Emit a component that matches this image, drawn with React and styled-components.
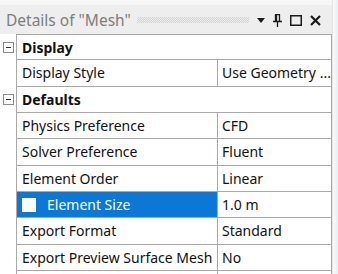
import React from 'react';
import styled, { createGlobalStyle } from 'styled-components';

const Global = createGlobalStyle`
  html, body {
    margin: 0;
    padding: 0;
    background: #ffffff;
  }
  body {
    font-family: "Noto Sans", "Open Sans", sans-serif;
  }
`

const Page = styled.div`
  display: flex;
  flex-direction: row;
  width: 338px;
  height: 274px;
  overflow: hidden;
  background: #ffffff;
`
const Main = styled.div`
  display: flex;
  flex-direction: column;
  width: 332px;
  flex-shrink: 0;
`
const RightEdge = styled.div`
  width: 6px;
  border-left: 1px solid #e4e4e4;
  background: linear-gradient(to right, #fafafa, #e9eef5);
  box-sizing: border-box;
`
const TopGap = styled.div`
  height: 5px;
  flex-shrink: 0;
  background: #f7f7f7;
`
const TitleBar = styled.div`
  height: 29px;
  flex-shrink: 0;
  display: flex;
  align-items: center;
  padding-left: 6px;
  padding-right: 11px;
  background: #eeeeee;
  box-sizing: border-box;
`
const Title = styled.span`
  font-size: 15.5px;
  color: #7d7d7d;
  white-space: nowrap;
`
const Grip = styled.div`
  flex: 1;
  height: 6px;
  margin: 1px 8px 0 6px;
  background: repeating-conic-gradient(#d2d2d2 0 25%, transparent 0 50%) 0 0 / 2px 2px;
`
const Icons = styled.div`
  display: flex;
  align-items: center;
  gap: 8px;
  padding-top: 1px;
`
const Row = styled.div`
  display: flex;
  flex-shrink: 0;
  height: 26.33px;
  box-sizing: border-box;
`
const Gutter = styled.div`
  width: 16px;
  display: flex;
  align-items: center;
  justify-content: flex-start;
  padding-left: 3px;
  box-sizing: border-box;
`
const Cells = styled.div`
  flex: 1;
  display: flex;
  border-left: 1px solid #a9a9a9;
  border-right: 1px solid #a9a9a9;
  border-bottom: 1px solid #a9a9a9;
  border-top: ${({first}) => first ? '1px solid #a9a9a9' : 'none'};
  box-sizing: border-box;
  font-size: 14px;
  color: #111111;
`
const GroupCell = styled.div`
  flex: 1;
  display: flex;
  align-items: center;
  padding-left: 5px;
  font-weight: 700;
`
const NameCell = styled.div`
  width: 201px;
  display: flex;
  align-items: center;
  gap: 11px;
  padding-left: 5px;
  border-right: 1px solid #a9a9a9;
  box-sizing: border-box;
  white-space: nowrap;
  background: ${({selected}) => selected ? '#0a78d4' : 'transparent'};
  color: ${({selected}) => selected ? '#ffffff' : 'inherit'};
`
const ValueCell = styled.div`
  flex: 1;
  display: flex;
  align-items: center;
  padding-left: 4px;
  white-space: nowrap;
  overflow: hidden;
`
const Check = styled.span`
  width: 14px;
  height: 14px;
  background: #ffffff;
  flex-shrink: 0;
`
const Minus = styled.span`
  width: 9px;
  height: 9px;
  border: 1px solid #8c8c8c;
  box-sizing: content-box;
  display: flex;
  align-items: center;
  justify-content: center;
  background: #ffffff;

  &::after {
    content: '';
    width: 5px;
    height: 1px;
    background: #333333;
  }
`

const rows = [
  { group: 'Display' },
  { name: 'Display Style', value: 'Use Geometry ...' },
  { group: 'Defaults' },
  { name: 'Physics Preference', value: 'CFD' },
  { name: 'Solver Preference', value: 'Fluent' },
  { name: 'Element Order', value: 'Linear' },
  { name: 'Element Size', value: '1.0 m', selected: true },
  { name: 'Export Format', value: 'Standard' },
  { name: 'Export Preview Surface Mesh', value: 'No' },
  { name: '', value: '' },
];

function App() {
  return (
    <>
      <Global />
      <Page>
        <Main>
          <TopGap />
          <TitleBar>
            <Title>Details of "Mesh"</Title>
            <Grip />
            <Icons>
              <svg width="8" height="5" viewBox="0 0 8 5">
                <path d="M0 0 H8 L4 5 Z" fill="#1b1b1b" />
              </svg>
              <svg width="9" height="13" viewBox="0 0 9 13">
                <path d="M2 0.5 H7 M2.5 0.5 V7.5 M6.5 0.5 V7.5 M3.5 0.5 V7.5 M0 7.5 H9 M4.5 7.5 V13" stroke="#1b1b1b" strokeWidth="1.3" fill="none" />
              </svg>
              <svg width="12" height="11" viewBox="0 0 12 11">
                <rect x="0.75" y="0.75" width="10.5" height="9.5" stroke="#1b1b1b" strokeWidth="1.5" fill="none" />
              </svg>
              <svg width="11" height="11" viewBox="0 0 11 11">
                <path d="M1 1 L10 10 M10 1 L1 10" stroke="#1b1b1b" strokeWidth="2.2" />
              </svg>
            </Icons>
          </TitleBar>
          {rows.map((r, i) => (
            <Row key={i}>
              <Gutter>{r.group && <Minus />}</Gutter>
              <Cells first={i === 0}>
                {r.group ? (
                  <GroupCell>{r.group}</GroupCell>
                ) : (
                  <>
                    <NameCell selected={r.selected}>
                      {r.selected && <Check />}
                      {r.name}
                    </NameCell>
                    <ValueCell>{r.value}</ValueCell>
                  </>
                )}
              </Cells>
            </Row>
          ))}
        </Main>
        <RightEdge />
      </Page>
    </>
  );
}

export default App;
